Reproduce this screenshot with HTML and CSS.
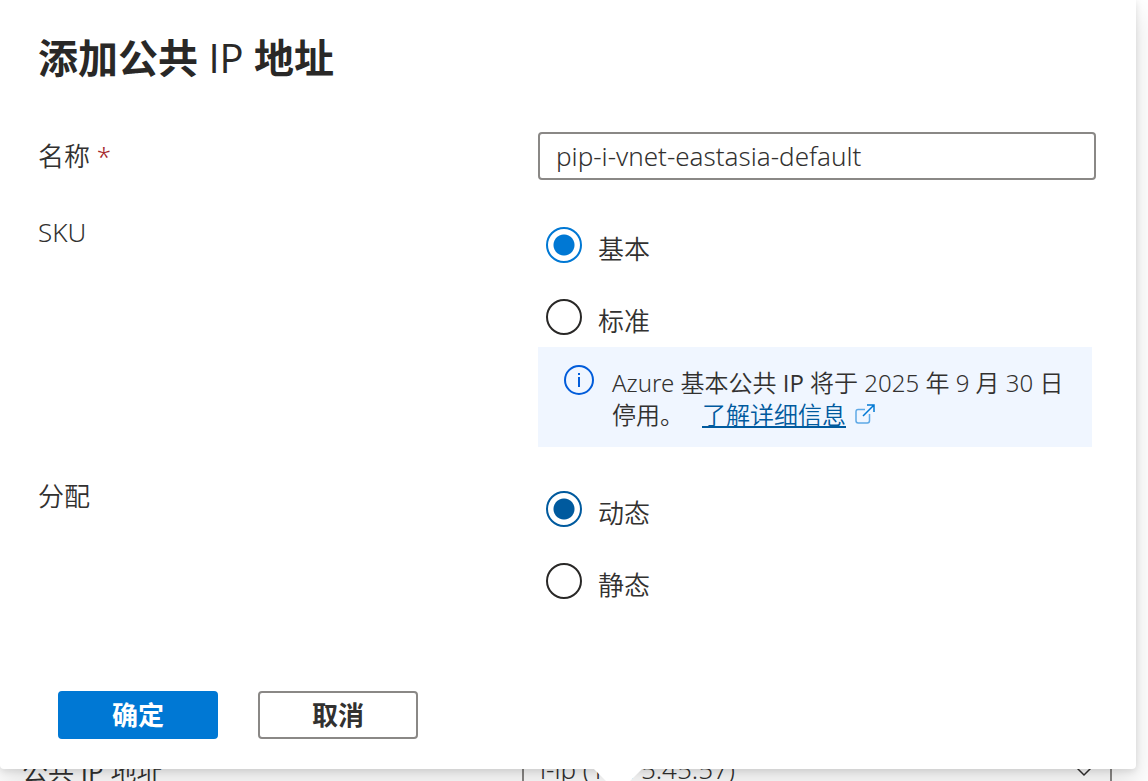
FILE: index.html
```html
<!DOCTYPE html>
<html lang="zh-CN">

<head>
    <meta charset="UTF-8">
    <title>添加公共 IP 地址</title>
    <link rel="stylesheet" href="styles.css">
</head>

<body>

    <form class="callout">
        <h1 class="callout-title">添加公共 <span class="latin">IP</span> 地址</h1>

        <div class="form-row name-row">
            <label class="form-label" for="name">名称 <span class="required">*</span></label>
            <input class="text-box" type="text" id="name" value="pip-i-vnet-eastasia-default">
        </div>

        <div class="form-row" role="radiogroup" aria-labelledby="sku-label">
            <div class="form-label" id="sku-label">SKU</div>
            <div class="form-field">
                <div class="radio-group">
                    <label class="radio-item">
                        <input type="radio" name="sku" checked>
                        <span class="radio-text">基本</span>
                    </label>
                    <label class="radio-item">
                        <input type="radio" name="sku">
                        <span class="radio-text">标准</span>
                    </label>
                </div>
                <div class="info-box">
                    <svg class="info-icon" viewBox="0 0 30 30">
                        <circle cx="15" cy="15" r="14" fill="none" stroke="#015cda" stroke-width="2" />
                        <rect x="14" y="12" width="2" height="10" fill="#015cda" />
                        <rect x="14" y="8" width="2" height="2" fill="#015cda" />
                    </svg>
                    <div class="info-text">
                        Azure 基本公共 <span class="latin">IP</span> 将于 2025 年 9 月 30 日停用。<a class="info-link" href="#">了解详细信息</a><svg class="link-icon" viewBox="0 0 20 20">
                            <path d="M10 5.5H3.2Q1 5.5 1 7.7V16.8Q1 19 3.2 19H12.3Q14.5 19 14.5 16.8V10" />
                            <path class="arrow" d="M12 1H19V8M19 1L8 12" />
                        </svg>
                    </div>
                </div>
            </div>
        </div>

        <div class="form-row" role="radiogroup" aria-labelledby="alloc-label">
            <div class="form-label" id="alloc-label">分配</div>
            <div class="form-field">
                <div class="radio-group">
                    <label class="radio-item">
                        <input class="hovered" type="radio" name="alloc" checked>
                        <span class="radio-text">动态</span>
                    </label>
                    <label class="radio-item">
                        <input type="radio" name="alloc">
                        <span class="radio-text">静态</span>
                    </label>
                </div>
            </div>
        </div>

        <div class="buttons">
            <button class="btn btn-primary" type="submit">确定</button>
            <button class="btn" type="button">取消</button>
        </div>
    </form>

    <!-- field the callout points at -->
    <div class="page-row">
        <label class="page-label" for="public-ip">公共 <span class="latin">IP</span> 地址</label>
        <div class="dropdown">
            <select id="public-ip">
                <option>i-ip (13.75.45.57)</option>
            </select>
            <svg class="chevron" viewBox="0 0 16 10">
                <path d="M1 1L8 8L15 1" />
            </svg>
        </div>
    </div>

</body>

</html>
```

FILE: styles.css
```css
* {
    box-sizing: border-box;
}

body {
    margin: 0;
    height: 100vh;
    overflow: hidden;
    background-color: #fff;
    color: #323130;
    font-family: "Noto Sans", "Noto Sans CJK SC", sans-serif;
    font-size: 26px;
    font-weight: 350;
    line-height: 34px;
}

input,
select,
button {
    color: inherit;
    font: inherit;
    margin: 0;
}

.callout {
    position: relative;
    z-index: 1;
    margin-right: 12px;
    padding: 30px 40px 30px 38px;
    background-color: #fff;
    border-radius: 0 0 4px 4px;
    box-shadow: 0 13px 29px rgba(0, 0, 0, 0.13), 0 2px 7px rgba(0, 0, 0, 0.11);
}

/* beak */
.callout::after {
    content: "";
    position: absolute;
    left: 601px;
    bottom: -17px;
    width: 34px;
    height: 34px;
    background-color: #fff;
    transform: rotate(45deg);
}

.callout-title {
    margin: 0 0 46px;
    color: #292827;
    font-size: 40px;
    font-weight: 700;
    line-height: 56px;
}

.latin {
    font-family: "Open Sans", sans-serif;
    font-weight: 400;
}

.form-row {
    display: grid;
    grid-template-columns: 500px 1fr;
    margin-bottom: 32px;
}

.name-row {
    align-items: center;
    margin-bottom: 35px;
}

.required {
    color: #a4262c;
}

.text-box {
    width: 100%;
    height: 48px;
    padding: 0 16px;
    border: 2px solid #8a8886;
    border-radius: 4px;
    background-color: #fff;
}

.radio-group {
    display: flex;
    flex-direction: column;
    gap: 12px;
}

.radio-item {
    display: flex;
    gap: 16px;
    padding: 12px 8px;
    height: 60px;
}

.radio-item input {
    appearance: none;
    width: 36px;
    height: 36px;
    border: 2px solid #292827;
    border-radius: 50%;
}

.radio-item input:checked {
    border-color: #0078d4;
    background: radial-gradient(circle, #0078d4 10px, transparent 11px);
}

.radio-item input.hovered:checked {
    border-color: #005a9e;
    background: radial-gradient(circle, #005a9e 10px, transparent 11px);
}

.radio-text {
    padding-top: 5px;
}

.info-box {
    display: flex;
    gap: 18px;
    margin-right: 4px;
    padding: 18px 16px 16px 26px;
    background-color: #f0f6ff;
    font-size: 24px;
    line-height: 32px;
}

.info-text {
    padding-top: 2px;
}

.info-icon {
    flex: none;
    width: 30px;
    height: 30px;
}

.info-link {
    margin-left: 18px;
    color: #005a9e;
}

.link-icon {
    width: 20px;
    height: 20px;
    margin-left: 9px;
    fill: none;
    stroke: #5ea9e6;
    stroke-width: 1.5;
}

.link-icon .arrow {
    stroke: #0078d4;
}

.buttons {
    display: flex;
    gap: 40px;
    margin-top: 80px;
    padding-left: 20px;
}

.btn {
    width: 160px;
    height: 48px;
    border: 2px solid #8a8886;
    border-radius: 4px;
    background-color: #fff;
    font-weight: 700;
}

.btn-primary {
    border-color: #0078d4;
    background-color: #0078d4;
    color: #fff;
}

.page-row {
    display: grid;
    grid-template-columns: 500px 1fr;
    align-items: center;
    margin-top: -24px;
    padding: 0 36px 0 22px;
}

.page-label {
    padding-top: 4px;
}

.dropdown {
    position: relative;
}

.dropdown select {
    appearance: none;
    width: 100%;
    height: 48px;
    padding: 0 16px;
    border: 2px solid #8a8886;
    border-radius: 4px;
    background-color: #fff;
}

.chevron {
    position: absolute;
    top: 22px;
    right: 20px;
    width: 16px;
    height: 10px;
    fill: none;
    stroke: #323130;
    stroke-width: 1.5;
}
```
